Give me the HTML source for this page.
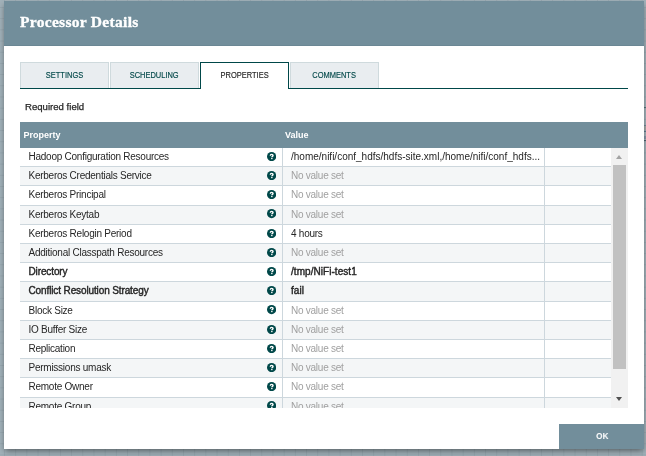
<!DOCTYPE html>
<html><head><meta charset="utf-8">
<style>
html,body{margin:0;padding:0;}
body{width:646px;height:456px;overflow:hidden;position:relative;
 background-color:#a1b1b9;
 background-image:linear-gradient(to right, rgba(120,138,148,0.25) 1px, transparent 1px),linear-gradient(to bottom, rgba(120,138,148,0.25) 1px, transparent 1px);
 background-size:11.2px 11.2px;background-position:4px 7px;
 font-family:"Liberation Sans",sans-serif;}
#dlg{will-change:transform;position:absolute;left:4px;top:1px;width:640px;height:448px;background:#fff;
 box-shadow:0 3px 6px -1px rgba(0,0,0,0.47);}
#hdr{position:absolute;left:0;top:0;width:640px;height:44px;background:#728e9b;border-bottom:1px solid #6b8794;}
#title{position:absolute;left:16px;top:11.8px;font-family:"Liberation Serif",serif;font-weight:bold;font-size:15.5px;letter-spacing:0.3px;-webkit-text-stroke:0.35px #fff;color:#fff;white-space:nowrap;}
.tab{position:absolute;top:61px;height:26px;background:#e9edf0;border:1px solid #cfdadd;border-bottom:none;box-sizing:border-box;
 font-size:8.6px;color:#004849;text-align:center;line-height:24.5px;}
.tab span{display:inline-block;transform:scaleX(0.87);-webkit-text-stroke:0.15px currentColor;}
.tab.sel{background:#fff;border:1px solid #004849;border-bottom:none;color:#262626;height:27px;}
#tabline{position:absolute;left:16px;top:87px;width:608px;height:1px;background:#004849;}
#req{position:absolute;left:21px;top:100.3px;font-size:9.6px;color:#262626;white-space:nowrap;-webkit-text-stroke:0.25px #262626;}
#grid{position:absolute;left:16px;top:121px;width:608px;height:286px;overflow:hidden;}
#ghdr{position:absolute;left:0;top:0;width:608px;height:26px;background:#728e9b;color:#fff;font-weight:bold;font-size:9px;}
#ghdr span{position:absolute;top:8px;}
.row{position:absolute;left:0;width:591px;height:19.2px;box-sizing:border-box;border-bottom:1px solid #cdd7dd;background:#fff;font-size:10px;letter-spacing:-0.25px;color:#262626;}
.row.odd{background:#f4f6f7;}
.row .c1{position:absolute;left:8.5px;top:3px;white-space:nowrap;}
.row .c2{position:absolute;left:271px;top:3px;white-space:nowrap;}
.row .nv{color:#a0a0a0;}
.row b{font-weight:normal;letter-spacing:-0.12px;-webkit-text-stroke:0.4px #262626;}
.row .vb{font-weight:normal;letter-spacing:0.05px;-webkit-text-stroke:0.4px #262626;}
.row .path{letter-spacing:0.0px;}
.row .help{position:absolute;left:246.7px;top:3.75px;width:9.2px;height:9.2px;}
.vline{position:absolute;top:26px;width:1px;height:260px;background:#cdd7dd;}
#sb{position:absolute;left:591px;top:26px;width:17px;height:260px;background:#f1f1f1;}
#thumb{position:absolute;left:2px;top:17px;width:13px;height:203.6px;background:#c1c1c1;}
.arr{position:absolute;left:4.9px;width:0;height:0;border-left:3.6px solid transparent;border-right:3.6px solid transparent;}
#up{top:6.8px;border-bottom:4px solid #a3a3a3;}
#down{top:248.8px;border-top:4px solid #505050;}
#ok{position:absolute;left:555px;top:423px;width:85px;height:25px;background:#728e9b;color:#fff;font-weight:bold;font-size:9.8px;text-align:center;line-height:24.6px;}
#ok span{display:inline-block;transform:scaleX(0.86);margin-left:1.5px;}
</style></head>
<body>
<div style="position:absolute;left:644px;top:107px;width:2px;height:1px;background:#557379"></div>
<div style="position:absolute;left:644px;top:125px;width:2px;height:1px;background:#74899a"></div>
<div style="position:absolute;left:644px;top:126px;width:2px;height:4px;background:#a3a7a6"></div>
<div style="position:absolute;left:644px;top:131px;width:2px;height:1px;background:#607a90"></div>
<div style="position:absolute;left:644px;top:136px;width:2px;height:3px;background:#8595a8"></div>
<div style="position:absolute;left:644px;top:140px;width:2px;height:1px;background:#4f6370"></div>
<div id="dlg">
 <div id="hdr"><div id="title">Processor Details</div></div>
 <div id="tabline"></div>
 <div class="tab" style="left:16px;width:89px;"><span>SETTINGS</span></div>
 <div class="tab" style="left:106px;width:89px;"><span>SCHEDULING</span></div>
 <div class="tab sel" style="left:196px;width:89px;"><span>PROPERTIES</span></div>
 <div class="tab" style="left:286px;width:89px;"><span>COMMENTS</span></div>
 <div id="req">Required field</div>
 <div id="grid">
  <div id="ghdr"><span style="left:3.5px">Property</span><span style="left:265px">Value</span></div>
  <div id="rows">
  <div class="row" style="top:26.0px"><span class="c1">Hadoop Configuration Resources</span><svg class="help" viewBox="0 0 10 10"><circle cx="5" cy="5" r="5" fill="#004849"/><path d="M3.6,4.1 C3.6,3.1 4.2,2.6 5.1,2.6 C6,2.6 6.6,3.1 6.6,3.8 C6.6,4.7 5.3,4.8 5.3,5.7" stroke="#fff" stroke-width="1.5" fill="none"/><rect x="4.5" y="6.4" width="1.5" height="1.4" fill="#fff"/></svg><span class="c2 v path">/home/nifi/conf_hdfs/hdfs-site.xml,/home/nifi/conf_hdfs...</span></div>
  <div class="row odd" style="top:45.2px"><span class="c1">Kerberos Credentials Service</span><svg class="help" viewBox="0 0 10 10"><circle cx="5" cy="5" r="5" fill="#004849"/><path d="M3.6,4.1 C3.6,3.1 4.2,2.6 5.1,2.6 C6,2.6 6.6,3.1 6.6,3.8 C6.6,4.7 5.3,4.8 5.3,5.7" stroke="#fff" stroke-width="1.5" fill="none"/><rect x="4.5" y="6.4" width="1.5" height="1.4" fill="#fff"/></svg><span class="c2 nv">No value set</span></div>
  <div class="row" style="top:64.4px"><span class="c1">Kerberos Principal</span><svg class="help" viewBox="0 0 10 10"><circle cx="5" cy="5" r="5" fill="#004849"/><path d="M3.6,4.1 C3.6,3.1 4.2,2.6 5.1,2.6 C6,2.6 6.6,3.1 6.6,3.8 C6.6,4.7 5.3,4.8 5.3,5.7" stroke="#fff" stroke-width="1.5" fill="none"/><rect x="4.5" y="6.4" width="1.5" height="1.4" fill="#fff"/></svg><span class="c2 nv">No value set</span></div>
  <div class="row odd" style="top:83.6px"><span class="c1">Kerberos Keytab</span><svg class="help" viewBox="0 0 10 10"><circle cx="5" cy="5" r="5" fill="#004849"/><path d="M3.6,4.1 C3.6,3.1 4.2,2.6 5.1,2.6 C6,2.6 6.6,3.1 6.6,3.8 C6.6,4.7 5.3,4.8 5.3,5.7" stroke="#fff" stroke-width="1.5" fill="none"/><rect x="4.5" y="6.4" width="1.5" height="1.4" fill="#fff"/></svg><span class="c2 nv">No value set</span></div>
  <div class="row" style="top:102.8px"><span class="c1">Kerberos Relogin Period</span><svg class="help" viewBox="0 0 10 10"><circle cx="5" cy="5" r="5" fill="#004849"/><path d="M3.6,4.1 C3.6,3.1 4.2,2.6 5.1,2.6 C6,2.6 6.6,3.1 6.6,3.8 C6.6,4.7 5.3,4.8 5.3,5.7" stroke="#fff" stroke-width="1.5" fill="none"/><rect x="4.5" y="6.4" width="1.5" height="1.4" fill="#fff"/></svg><span class="c2 v">4 hours</span></div>
  <div class="row odd" style="top:122.0px"><span class="c1">Additional Classpath Resources</span><svg class="help" viewBox="0 0 10 10"><circle cx="5" cy="5" r="5" fill="#004849"/><path d="M3.6,4.1 C3.6,3.1 4.2,2.6 5.1,2.6 C6,2.6 6.6,3.1 6.6,3.8 C6.6,4.7 5.3,4.8 5.3,5.7" stroke="#fff" stroke-width="1.5" fill="none"/><rect x="4.5" y="6.4" width="1.5" height="1.4" fill="#fff"/></svg><span class="c2 nv">No value set</span></div>
  <div class="row" style="top:141.2px"><span class="c1"><b>Directory</b></span><svg class="help" viewBox="0 0 10 10"><circle cx="5" cy="5" r="5" fill="#004849"/><path d="M3.6,4.1 C3.6,3.1 4.2,2.6 5.1,2.6 C6,2.6 6.6,3.1 6.6,3.8 C6.6,4.7 5.3,4.8 5.3,5.7" stroke="#fff" stroke-width="1.5" fill="none"/><rect x="4.5" y="6.4" width="1.5" height="1.4" fill="#fff"/></svg><span class="c2 vb">/tmp/NiFi-test1</span></div>
  <div class="row odd" style="top:160.4px"><span class="c1"><b>Conflict Resolution Strategy</b></span><svg class="help" viewBox="0 0 10 10"><circle cx="5" cy="5" r="5" fill="#004849"/><path d="M3.6,4.1 C3.6,3.1 4.2,2.6 5.1,2.6 C6,2.6 6.6,3.1 6.6,3.8 C6.6,4.7 5.3,4.8 5.3,5.7" stroke="#fff" stroke-width="1.5" fill="none"/><rect x="4.5" y="6.4" width="1.5" height="1.4" fill="#fff"/></svg><span class="c2 vb">fail</span></div>
  <div class="row" style="top:179.6px"><span class="c1">Block Size</span><svg class="help" viewBox="0 0 10 10"><circle cx="5" cy="5" r="5" fill="#004849"/><path d="M3.6,4.1 C3.6,3.1 4.2,2.6 5.1,2.6 C6,2.6 6.6,3.1 6.6,3.8 C6.6,4.7 5.3,4.8 5.3,5.7" stroke="#fff" stroke-width="1.5" fill="none"/><rect x="4.5" y="6.4" width="1.5" height="1.4" fill="#fff"/></svg><span class="c2 nv">No value set</span></div>
  <div class="row odd" style="top:198.8px"><span class="c1">IO Buffer Size</span><svg class="help" viewBox="0 0 10 10"><circle cx="5" cy="5" r="5" fill="#004849"/><path d="M3.6,4.1 C3.6,3.1 4.2,2.6 5.1,2.6 C6,2.6 6.6,3.1 6.6,3.8 C6.6,4.7 5.3,4.8 5.3,5.7" stroke="#fff" stroke-width="1.5" fill="none"/><rect x="4.5" y="6.4" width="1.5" height="1.4" fill="#fff"/></svg><span class="c2 nv">No value set</span></div>
  <div class="row" style="top:218.0px"><span class="c1">Replication</span><svg class="help" viewBox="0 0 10 10"><circle cx="5" cy="5" r="5" fill="#004849"/><path d="M3.6,4.1 C3.6,3.1 4.2,2.6 5.1,2.6 C6,2.6 6.6,3.1 6.6,3.8 C6.6,4.7 5.3,4.8 5.3,5.7" stroke="#fff" stroke-width="1.5" fill="none"/><rect x="4.5" y="6.4" width="1.5" height="1.4" fill="#fff"/></svg><span class="c2 nv">No value set</span></div>
  <div class="row odd" style="top:237.2px"><span class="c1">Permissions umask</span><svg class="help" viewBox="0 0 10 10"><circle cx="5" cy="5" r="5" fill="#004849"/><path d="M3.6,4.1 C3.6,3.1 4.2,2.6 5.1,2.6 C6,2.6 6.6,3.1 6.6,3.8 C6.6,4.7 5.3,4.8 5.3,5.7" stroke="#fff" stroke-width="1.5" fill="none"/><rect x="4.5" y="6.4" width="1.5" height="1.4" fill="#fff"/></svg><span class="c2 nv">No value set</span></div>
  <div class="row" style="top:256.4px"><span class="c1">Remote Owner</span><svg class="help" viewBox="0 0 10 10"><circle cx="5" cy="5" r="5" fill="#004849"/><path d="M3.6,4.1 C3.6,3.1 4.2,2.6 5.1,2.6 C6,2.6 6.6,3.1 6.6,3.8 C6.6,4.7 5.3,4.8 5.3,5.7" stroke="#fff" stroke-width="1.5" fill="none"/><rect x="4.5" y="6.4" width="1.5" height="1.4" fill="#fff"/></svg><span class="c2 nv">No value set</span></div>
  <div class="row odd" style="top:275.6px"><span class="c1">Remote Group</span><svg class="help" viewBox="0 0 10 10"><circle cx="5" cy="5" r="5" fill="#004849"/><path d="M3.6,4.1 C3.6,3.1 4.2,2.6 5.1,2.6 C6,2.6 6.6,3.1 6.6,3.8 C6.6,4.7 5.3,4.8 5.3,5.7" stroke="#fff" stroke-width="1.5" fill="none"/><rect x="4.5" y="6.4" width="1.5" height="1.4" fill="#fff"/></svg><span class="c2 nv">No value set</span></div>
  </div><!--rows-->
  <div class="vline" style="left:262px"></div>
  <div class="vline" style="left:524px"></div>
  <div id="sb"><div class="arr" id="up"></div><div id="thumb"></div><div class="arr" id="down"></div></div>
 </div>
 <div id="ok"><span>OK</span></div>
</div>
</body></html>
